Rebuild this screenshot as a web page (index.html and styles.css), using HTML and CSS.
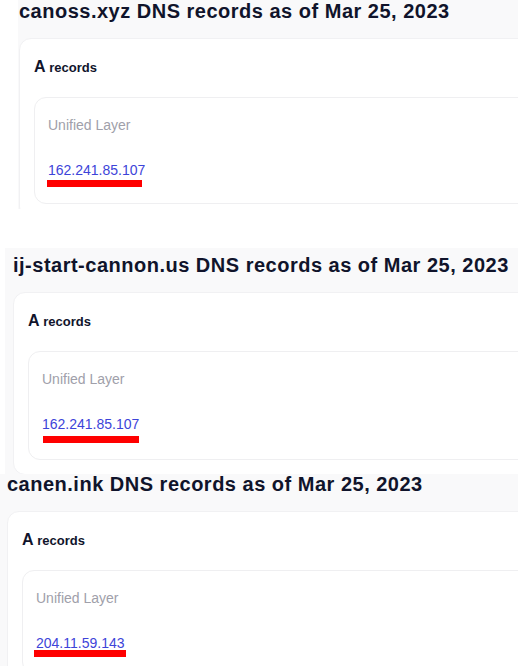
FILE: index.html
```html
<!DOCTYPE html>
<html lang="en">
<head>
<meta charset="utf-8">
<title>DNS records</title>
<link rel="stylesheet" href="styles.css">
</head>
<body>
  <section class="shot shot--1">
    <div class="page">
      <h2 class="title">canoss.xyz DNS records as of Mar 25, 2023</h2>
      <div class="card">
        <h3 class="rtype"><span class="rtype__big">A</span> records</h3>
        <div class="rec">
          <div class="org">Unified Layer</div>
          <a class="ip" href="#">162.241.85.107</a>
          <div class="mark mark--1"></div>
        </div>
      </div>
    </div>
  </section>

  <section class="shot shot--2">
    <div class="page">
      <h2 class="title">ij-start-cannon.us DNS records as of Mar 25, 2023</h2>
      <div class="card">
        <h3 class="rtype"><span class="rtype__big">A</span> records</h3>
        <div class="rec">
          <div class="org">Unified Layer</div>
          <a class="ip" href="#">162.241.85.107</a>
          <div class="mark mark--2"></div>
        </div>
      </div>
    </div>
  </section>

  <section class="shot shot--3">
    <div class="page">
      <h2 class="title">canen.ink DNS records as of Mar 25, 2023</h2>
      <div class="card">
        <h3 class="rtype"><span class="rtype__big">A</span> records</h3>
        <div class="rec">
          <div class="org">Unified Layer</div>
          <a class="ip" href="#">204.11.59.143</a>
          <div class="mark mark--3"></div>
        </div>
      </div>
    </div>
  </section>
</body>
</html>
```
FILE: styles.css
```css
* { box-sizing: border-box; }

html, body {
  margin: 0;
  padding: 0;
  background: #ffffff;
}

body {
  width: 518px;
  height: 666px;
  overflow: hidden;
  font-family: "Liberation Sans", Arial, sans-serif;
  color: #10142b;
}

.shot {
  background: #f9f9fa;
  overflow: hidden;
}

.shot--1 {
  margin-left: 18px;
  height: 209px;
  padding-left: 1px;
}

.shot--2 {
  margin-top: 39px;
  margin-left: 5px;
  height: 226px;
  padding-left: 8px;
  padding-top: 6px;
}

.shot--3 {
  height: 192px;
  padding-left: 7px;
}

.page {
  width: 720px;
}

.title {
  margin: 0;
  font-size: 20px;
  line-height: 22px;
  font-weight: 700;
  letter-spacing: 0.5px;
  color: #10142b;
  white-space: nowrap;
}

.shot--3 .title {
  margin-top: -1px;
}

.card {
  margin-top: 16px;
  background: #ffffff;
  border: 1px solid #f1f1f3;
  border-radius: 12px;
  padding: 18px 14px 14px 14px;
}

.rtype {
  margin: 0;
  font-size: 13px;
  line-height: 20px;
  font-weight: 700;
  color: #10142b;
}

.rtype__big {
  font-size: 16px;
}

.rec {
  margin-top: 19px;
  border: 1px solid #efeff1;
  border-radius: 12px;
  padding: 17px 13px 16px 13px;
}

.org {
  font-size: 14px;
  line-height: 20px;
  color: #a0a0aa;
}

.ip {
  display: inline-block;
  margin-top: 25px;
  font-size: 14px;
  line-height: 20px;
  color: #3d44d9;
  text-decoration: none;
}

.mark {
  height: 7px;
  background: #ff0000;
}

.mark--1 {
  width: 95px;
  margin-left: -1px;
  margin-top: 0;
}

.mark--2 {
  width: 96px;
  margin-left: 1px;
  margin-top: 2px;
}

.mark--3 {
  width: 92px;
  margin-left: -2px;
  margin-top: -3px;
}
```
